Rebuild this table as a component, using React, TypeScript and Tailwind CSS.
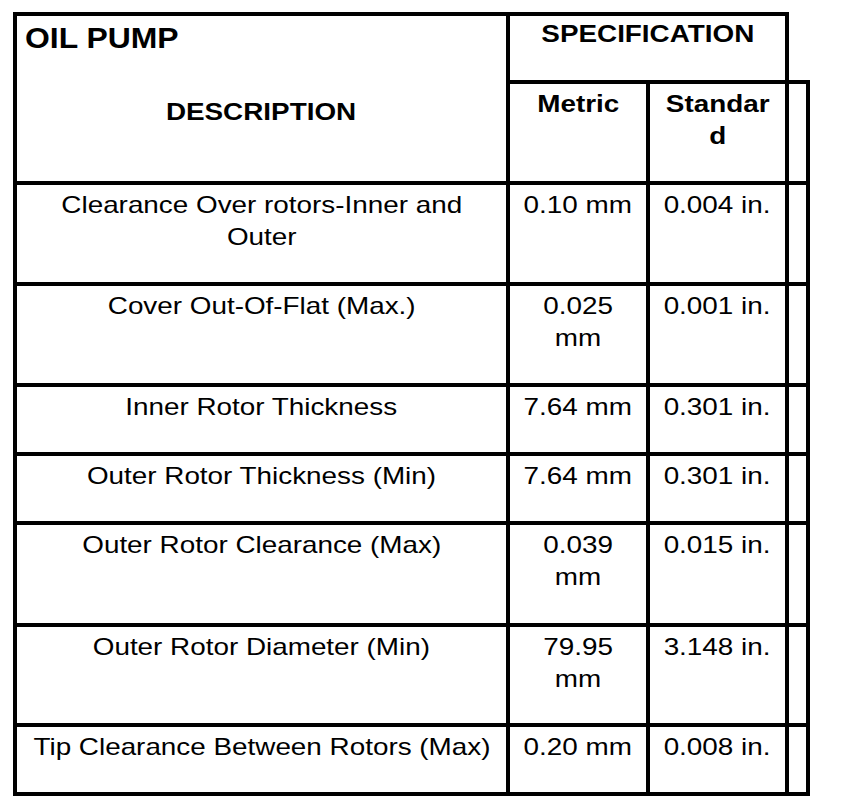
import React from "react";

type SpecRow = {
  desc: string[];
  metric: string[];
  std: string[];
  h: string;
};

const rows: SpecRow[] = [
  { desc: ["Clearance Over rotors-Inner and", "Outer"], metric: ["0.10 mm"], std: ["0.004 in."], h: "h-[101px]" },
  { desc: ["Cover Out-Of-Flat (Max.)"], metric: ["0.025", "mm"], std: ["0.001 in."], h: "h-[101px]" },
  { desc: ["Inner Rotor Thickness"], metric: ["7.64 mm"], std: ["0.301 in."], h: "h-[69px]" },
  { desc: ["Outer Rotor Thickness (Min)"], metric: ["7.64 mm"], std: ["0.301 in."], h: "h-[69px]" },
  { desc: ["Outer Rotor Clearance (Max)"], metric: ["0.039", "mm"], std: ["0.015 in."], h: "h-[102px]" },
  { desc: ["Outer Rotor Diameter (Min)"], metric: ["79.95", "mm"], std: ["3.148 in."], h: "h-[100px]" },
  { desc: ["Tip Clearance Between Rotors (Max)"], metric: ["0.20 mm"], std: ["0.008 in."], h: "h-[69px]" },
];

// the scan is stretched sideways, so the glyphs are too
const Lines = ({ lines }: { lines: string[] }) => (
  <span className="inline-block scale-x-[1.16] origin-center whitespace-nowrap">
    {lines.map((l, i) => (
      <React.Fragment key={i}>
        {i > 0 && <br />}
        {l}
      </React.Fragment>
    ))}
  </span>
);

export default function App() {
  return (
    <div
      className="bg-white text-black pt-[12px] pl-[13px] min-h-screen"
      style={{ fontFamily: '"Liberation Sans", Arial, sans-serif' }}
    >
      {/* header */}
      <div className="flex">
        <div className="w-[497px] h-[173px] border-4 border-black">
          <div className="pt-[6px] pl-[8px] text-[29px] font-bold leading-[32px]">
            <span className="inline-block scale-x-[1.1] origin-left">OIL PUMP</span>
          </div>
          <div className="mt-[42px] text-center text-[24px] font-bold leading-[32px]">
            <Lines lines={["DESCRIPTION"]} />
          </div>
        </div>
        <div className="flex flex-col">
          <div className="flex">
            <div className="w-[279px] h-[72px] border-t-4 border-r-4 border-b-4 border-black pt-[2px] text-center text-[24px] font-bold leading-[32px]">
              <Lines lines={["SPECIFICATION"]} />
            </div>
            <div className="w-[21px] h-[72px] border-b-4 border-black" />
          </div>
          <div className="flex h-[101px] text-[24px] font-bold leading-[32px]">
            <div className="w-[140px] border-r-4 border-b-4 border-black pt-[4px] text-center">
              <Lines lines={["Metric"]} />
            </div>
            <div className="w-[139px] border-r-4 border-b-4 border-black pt-[4px] text-center">
              <Lines lines={["Standar", "d"]} />
            </div>
            <div className="w-[21px] border-r-4 border-b-4 border-black" />
          </div>
        </div>
      </div>

      {/* rows */}
      {rows.map((r, i) => (
        <div key={i} className={`flex ${r.h} text-[24px] leading-[32px]`}>
          <div className="w-[497px] border-l-4 border-r-4 border-b-4 border-black pt-[4px] text-center">
            <Lines lines={r.desc} />
          </div>
          <div className="w-[140px] border-r-4 border-b-4 border-black pt-[4px] text-center">
            <Lines lines={r.metric} />
          </div>
          <div className="w-[139px] border-r-4 border-b-4 border-black pt-[4px] text-center">
            <Lines lines={r.std} />
          </div>
          <div className="w-[21px] border-r-4 border-b-4 border-black" />
        </div>
      ))}
    </div>
  );
}
